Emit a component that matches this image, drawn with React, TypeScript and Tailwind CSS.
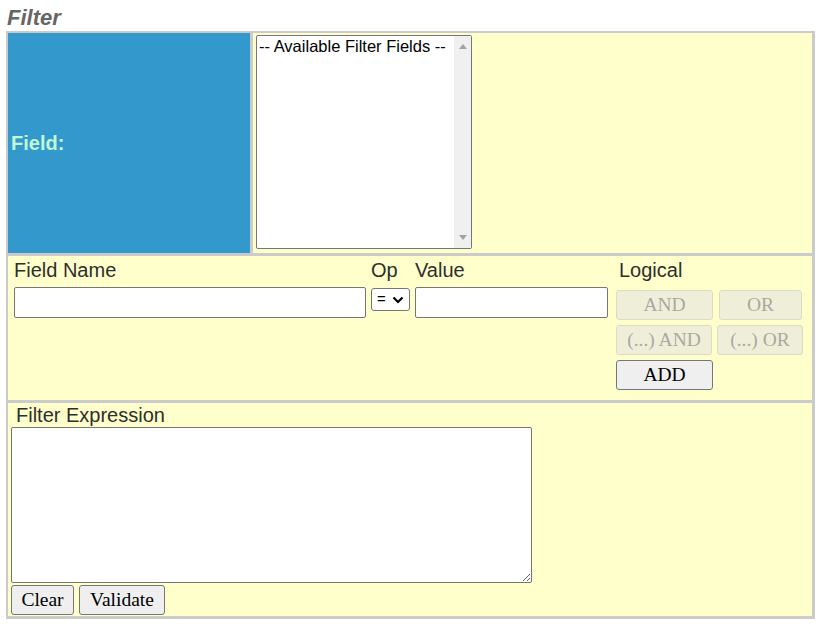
import React from "react";

const sans = "font-['Liberation_Sans',Arial,sans-serif]";
const serif = "font-['Liberation_Serif','Times_New_Roman',serif]";

const LogicButton = ({ label, disabled = true, className = "" }: { label: string; disabled?: boolean; className?: string }) => (
  <button
    type="button"
    disabled={disabled}
    className={`${serif} h-[30px] rounded-[3px] border text-[19.5px] leading-none ${
      disabled
        ? "border-[#dcdcc6] bg-[#efefd9] text-[#a9a9a0]"
        : "border-[#767676] bg-[#efefef] text-black"
    } ${className}`}
  >
    {label}
  </button>
);

export default function App() {
  return (
    <div className={`${sans} min-h-screen bg-white text-[#2e2e2e]`}>
      <h1 className="h-[31px] pl-[7px] pt-[5px] text-[22px] leading-[26px] font-bold italic text-[#666]">
        Filter
      </h1>

      {/* table frame */}
      <div className="ml-[6px] flex w-[809px] flex-col gap-[3px] bg-[#cbcbcb] pt-[2px] pb-[3px] pl-[2px] pr-[3px]">
        {/* field picker */}
        <div className="flex h-[220px] gap-[3px]">
          <div className="flex w-[242px] items-center bg-[#3399cc] pl-[3px]">
            <span className="text-[20px] font-bold text-[#bff8d6]">Field:</span>
          </div>
          <div className="flex-1 bg-[#ffffcc] pl-[3px] pt-[2px]">
            <div className="flex h-[214px] w-[216px] rounded-[2px] border border-[#767676] bg-white">
              <div className="flex-1 pl-[2px] pt-[1px] text-[16.5px] leading-[19px] text-black">
                -- Available Filter Fields --
              </div>
              <div className="flex w-[17px] flex-col items-center justify-between bg-[#f0f0f0] py-[8px]">
                <svg width="8" height="5" viewBox="0 0 8 5">
                  <path d="M0 5 L4 0 L8 5 Z" fill="#a3a3a3" />
                </svg>
                <svg width="8" height="5" viewBox="0 0 8 5">
                  <path d="M0 0 L4 5 L8 0 Z" fill="#a3a3a3" />
                </svg>
              </div>
            </div>
          </div>
        </div>

        {/* condition builder */}
        <div className="flex h-[144px] bg-[#ffffcc] pl-[6px] pt-[3px]">
          <div className="flex w-[357px] flex-col">
            <label className="text-[20px] leading-[23px]">Field Name</label>
            <input className="mt-[5px] h-[31px] w-[352px] rounded-[2px] border border-[#767676] bg-white" />
          </div>
          <div className="flex w-[44px] flex-col">
            <label className="text-[20px] leading-[23px]">Op</label>
            <div className="mt-[6px] flex h-[23px] w-[39px] items-center justify-between rounded-[3px] border border-[#767676] bg-white pl-[5px] pr-[5px] text-[15px] text-black">
              <span>=</span>
              <svg width="12" height="8" viewBox="0 0 12 8">
                <path d="M1.5 1.5 L6 6 L10.5 1.5" fill="none" stroke="#000" strokeWidth="2.2" />
              </svg>
            </div>
          </div>
          <div className="flex w-[201px] flex-col">
            <label className="text-[20px] leading-[23px]">Value</label>
            <input className="mt-[5px] h-[31px] w-[193px] rounded-[2px] border border-[#767676] bg-white" />
          </div>
          <div className="flex flex-col">
            <label className="pl-[3px] text-[20px] leading-[23px]">Logical</label>
            <div className="mt-[8px] grid grid-cols-[101px_88px] gap-y-[5px]">
              <LogicButton label="AND" className="w-[97px]" />
              <LogicButton label="OR" className="ml-[2px] w-[83px]" />
              <LogicButton label="(...) AND" className="w-[96px]" />
              <LogicButton label="(...) OR" className="w-[86px]" />
              <LogicButton label="ADD" disabled={false} className="w-[97px]" />
            </div>
          </div>
        </div>

        {/* expression */}
        <div className="flex h-[213px] flex-col bg-[#ffffcc] pl-[3px] pt-[1px]">
          <label className="pl-[5px] text-[20px] leading-[23px]">Filter Expression</label>
          <textarea className="h-[156px] w-[521px] rounded-[2px] border border-[#767676] bg-white" />
          <div className="mt-[2px] flex gap-[5px]">
            <LogicButton label="Clear" disabled={false} className="w-[63px]" />
            <LogicButton label="Validate" disabled={false} className="w-[86px]" />
          </div>
        </div>
      </div>
    </div>
  );
}
